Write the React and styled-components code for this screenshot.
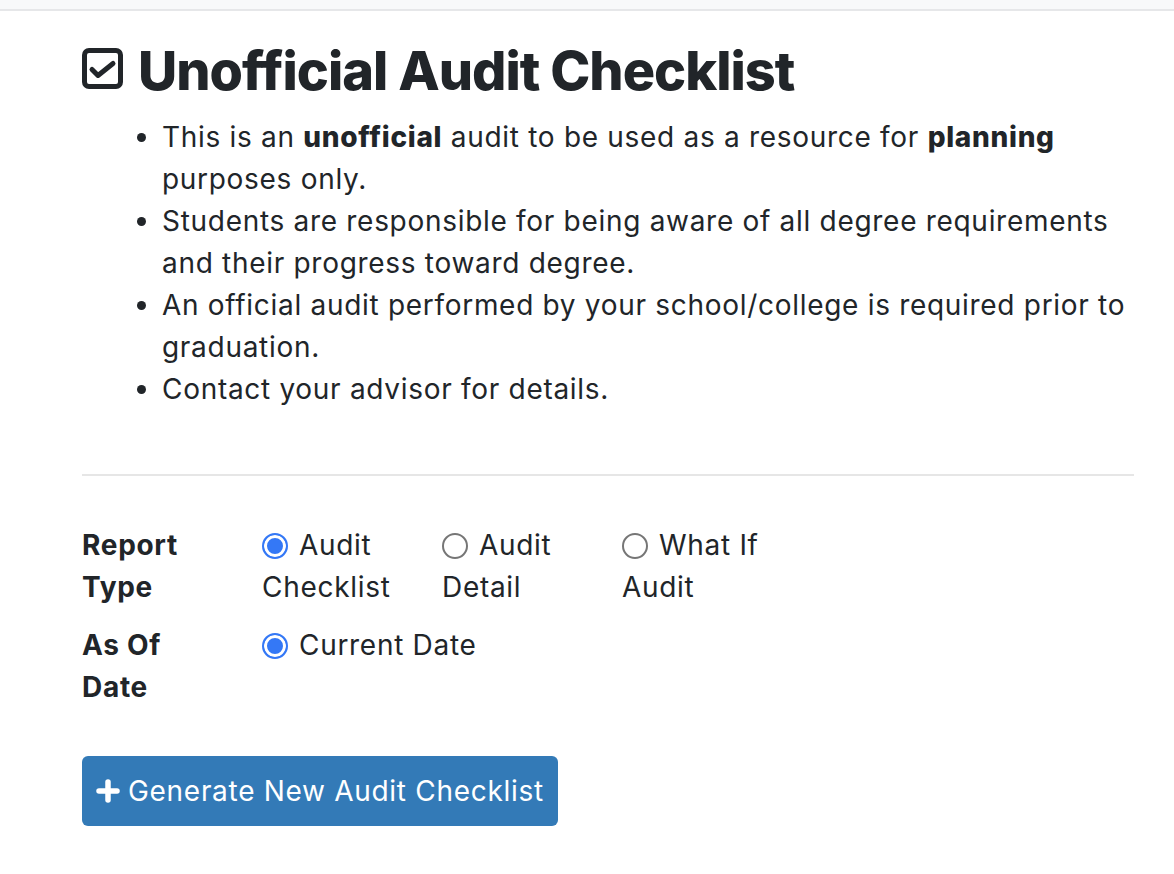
import React from 'react';
import styled, { createGlobalStyle } from 'styled-components';

const GlobalStyle = createGlobalStyle`
  body {
    margin: 0;
    background: #fff;
    color: #212529;
    font-family: Inter, "Open Sans", sans-serif;
    font-size: 28px;
    line-height: 42px;
    letter-spacing: 0.7px;
  }
`;

const TopBar = styled.div`
  height: 9px;
  background: #f8f9fa;
  border-bottom: 2px solid #e6e7e9;
`;

const Page = styled.main`
  width: 1052px;
  padding: 0 40px 0 82px;
`;

const Heading = styled.h2`
  display: flex;
  align-items: flex-start;
  gap: 14px;
  margin: 27px 0 13px;
  font-size: 54px;
  line-height: 65px;
  font-weight: 800;
  letter-spacing: -1px;
`;

const HeadingIcon = styled.svg`
  flex: 0 0 auto;
  margin-top: 10px;
`;

const Notes = styled.ul`
  margin: 0;
  padding-left: 80px;

  strong {
    font-weight: 800;
  }
`;

const Divider = styled.hr`
  margin: 64px 0 48px;
  border: 0;
  height: 2px;
  background: #e6e6e6;
`;

const FormRow = styled.div`
  display: flex;
  align-items: flex-start;
  margin-bottom: ${p => p.$gap || 0}px;
`;

const FieldLabel = styled.div`
  flex: 0 0 180px;
  box-sizing: border-box;
  padding-right: 60px;
  font-weight: 700;
`;

const Options = styled.div`
  display: flex;
`;

const Option = styled.label`
  display: block;
  box-sizing: border-box;
  width: ${p => (p.$width ? `${p.$width}px` : 'auto')};
  padding-right: 20px;
  cursor: pointer;
`;

const Radio = styled.span`
  display: inline-block;
  width: 26px;
  height: 26px;
  box-sizing: border-box;
  border-radius: 50%;
  vertical-align: -4px;
  margin-right: 11px;
  border: 2px solid ${p => (p.$checked ? '#3478f6' : '#767676')};
  background: ${p => (p.$checked ? '#3478f6' : '#fff')};
  box-shadow: ${p => (p.$checked ? 'inset 0 0 0 3px #fff' : 'none')};
`;

const GenerateButton = styled.button`
  display: inline-flex;
  align-items: center;
  gap: 8px;
  margin-top: 48px;
  padding: 14px 14px;
  border: 0;
  border-radius: 6px;
  background: #337ab7;
  color: #fff;
  font: inherit;
  letter-spacing: inherit;
  cursor: pointer;
`;

const CheckSquare = () => (
  <HeadingIcon width="42" height="42" viewBox="0 0 42 42" fill="none" stroke="#212529">
    <rect x="2.5" y="2.5" width="36" height="36" rx="4.5" strokeWidth="5" />
    <polyline
      points="10,21.5 16,27.5 31,15.5"
      strokeWidth="5"
      strokeLinecap="round"
      strokeLinejoin="round"
    />
  </HeadingIcon>
);

const PlusIcon = () => (
  <svg width="24" height="24" viewBox="0 0 24 24" fill="none" stroke="#fff" strokeWidth="5.5" strokeLinecap="round">
    <line x1="12" y1="3" x2="12" y2="21" />
    <line x1="3" y1="12" x2="21" y2="12" />
  </svg>
);

const reportTypes = [
  { label: 'Audit Checklist', checked: true },
  { label: 'Audit Detail', checked: false },
  { label: 'What If Audit', checked: false },
];

export default function App() {
  return (
    <>
      <GlobalStyle />
      <TopBar />
      <Page>
        <Heading>
          <CheckSquare />
          Unofficial Audit Checklist
        </Heading>
        <Notes>
          <li>
            This is an <strong>unofficial</strong> audit to be used as a resource for <strong>planning</strong> purposes only.
          </li>
          <li>Students are responsible for being aware of all degree requirements and their progress toward degree.</li>
          <li>An official audit performed by your school/college is required prior to graduation.</li>
          <li>Contact your advisor for details.</li>
        </Notes>
        <Divider />
        <FormRow $gap={16}>
          <FieldLabel>Report Type</FieldLabel>
          <Options>
            {reportTypes.map(t => (
              <Option key={t.label} $width={180}>
                <Radio $checked={t.checked} />
                {t.label}
              </Option>
            ))}
          </Options>
        </FormRow>
        <FormRow>
          <FieldLabel>As Of Date</FieldLabel>
          <Options>
            <Option>
              <Radio $checked />
              Current Date
            </Option>
          </Options>
        </FormRow>
        <GenerateButton type="button">
          <PlusIcon />
          Generate New Audit Checklist
        </GenerateButton>
      </Page>
    </>
  );
}
